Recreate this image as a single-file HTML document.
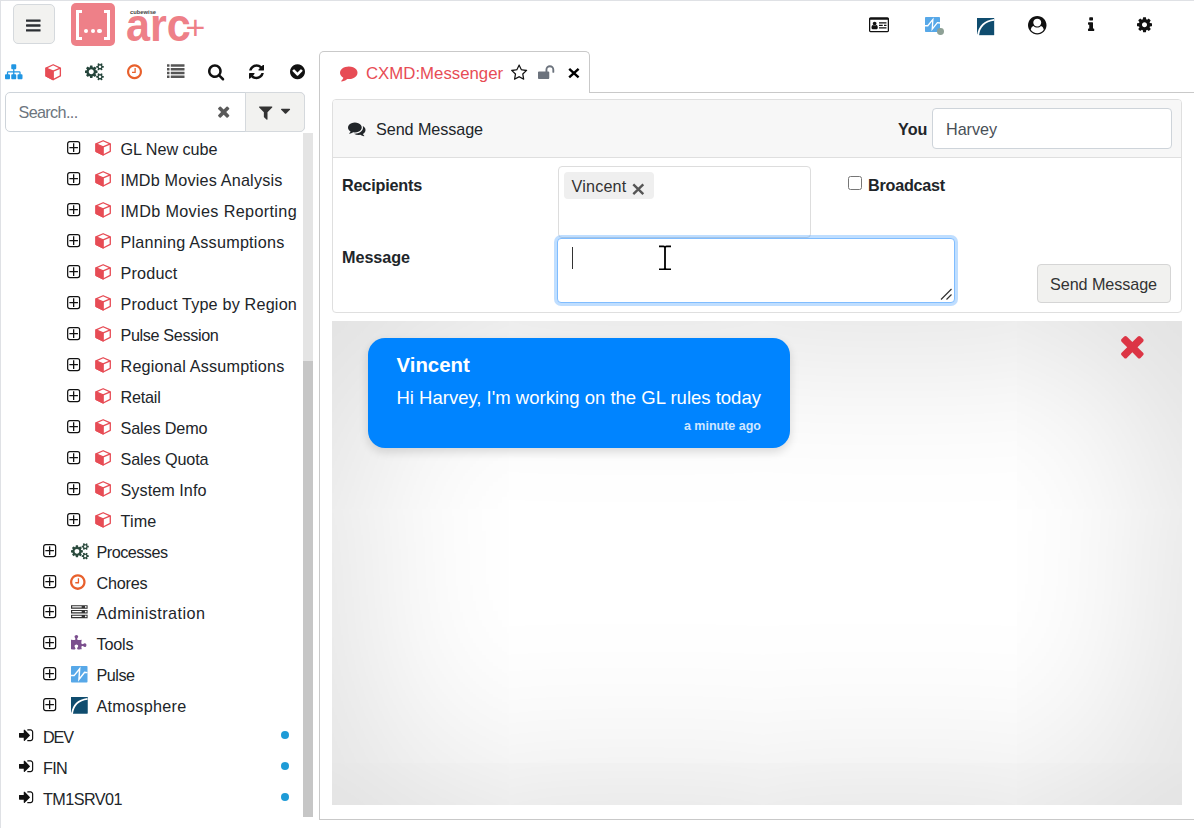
<!DOCTYPE html>
<html lang="en"><head><meta charset="utf-8"><title>Arc+ Messenger</title>
<style>
html,body{margin:0;padding:0}
body{width:1194px;height:828px;position:relative;overflow:hidden;background:#fff;font-family:"Liberation Sans",sans-serif;color:#212529;font-size:16.2px}
.i{position:absolute;display:block;overflow:visible}
.t{position:absolute;white-space:nowrap;line-height:24px;height:24px;font-size:16.2px;transform-origin:0 50%}
.b{font-weight:bold}
.abs{position:absolute}
.dot{position:absolute;left:281px;width:8px;height:8px;border-radius:50%;background:#1e9bd7}
</style></head><body>
<div class="abs" style="left:0;top:0;width:1194px;height:1px;background:#dfe1e5"></div>
<div class="abs" style="left:0;top:0;width:1px;height:828px;background:#dfe1e5"></div>

<!-- header -->
<div class="abs" style="left:13.3px;top:4px;width:39.5px;height:38px;border:1px solid #d5d9dd;border-radius:5px;background:#f2f2f0"></div>
<svg class="i" style="left:26.2px;top:16.5px;width:14.57px;height:17px;" viewBox="0 -1536 1536 1792"><path fill="#2b2f33" transform="scale(1,-1)" d="M1536 192v-128q0 -26 -19 -45t-45 -19h-1408q-26 0 -45 19t-19 45v128q0 26 19 45t45 19h1408q26 0 45 -19t19 -45zM1536 704v-128q0 -26 -19 -45t-45 -19h-1408q-26 0 -45 19t-19 45v128q0 26 19 45t45 19h1408q26 0 45 -19t19 -45zM1536 1216v-128q0 -26 -19 -45 t-45 -19h-1408q-26 0 -45 19t-19 45v128q0 26 19 45t45 19h1408q26 0 45 -19t19 -45z"/></svg>
<div class="abs" style="left:71px;top:2.7px;width:44px;height:43px;border-radius:5px;background:#ee8088"></div>
<div class="abs" style="left:75.5px;top:9.5px;width:6px;height:30px;border:3.4px solid #fff;border-right:none;box-sizing:border-box"></div>
<div class="abs" style="left:104px;top:9.5px;width:6px;height:30px;border:3.4px solid #fff;border-left:none;box-sizing:border-box"></div>
<div class="abs" style="left:83.8px;top:28.6px;width:4.6px;height:4.6px;border-radius:50%;background:#fff"></div>
<div class="abs" style="left:90.5px;top:28.6px;width:4.6px;height:4.6px;border-radius:50%;background:#fff"></div>
<div class="abs" style="left:97.2px;top:28.6px;width:4.6px;height:4.6px;border-radius:50%;background:#fff"></div>
<span class="abs" id="cw" style="left:130px;top:7.6px;font-size:5.8px;font-weight:bold;color:#444;line-height:8px;letter-spacing:0">cubewise</span>
<span class="abs" id="arc" style="left:126.3px;top:1.3px;font-size:45.7px;font-weight:bold;color:#ee8088;line-height:50px;transform:scaleX(0.945);transform-origin:0 0;white-space:nowrap">arc</span>
<span class="abs" id="plus" style="left:185.6px;top:6.8px;font-size:34px;color:#ee8088;line-height:40px">+</span>
<svg class="i" style="left:869px;top:16px;width:20.00px;height:17.5px;" viewBox="0 -1536 2048 1792"><path fill="#111" transform="scale(1,-1)" d="M896 324q0 -55 -31.5 -93.5t-75.5 -38.5h-426q-44 0 -75.5 38.5t-31.5 93.5q0 54 7.5 100.5t24.5 90t51 68.5t81 25q64 -64 156 -64t156 64q47 0 81 -25t51 -68.5t24.5 -90t7.5 -100.5zM768 768q0 -80 -56 -136t-136 -56t-136 56t-56 136t56 136t136 56t136 -56t56 -136z M1792 352v-64q0 -14 -9 -23t-23 -9h-704q-14 0 -23 9t-9 23v64q0 14 9 23t23 9h704q14 0 23 -9t9 -23zM1408 608v-64q0 -14 -9 -23t-23 -9h-320q-14 0 -23 9t-9 23v64q0 14 9 23t23 9h320q14 0 23 -9t9 -23zM1792 608v-64q0 -14 -9 -23t-23 -9h-192q-14 0 -23 9t-9 23v64 q0 14 9 23t23 9h192q14 0 23 -9t9 -23zM1792 864v-64q0 -14 -9 -23t-23 -9h-704q-14 0 -23 9t-9 23v64q0 14 9 23t23 9h704q14 0 23 -9t9 -23zM1920 32v1120h-1792v-1120q0 -13 9.5 -22.5t22.5 -9.5h1728q13 0 22.5 9.5t9.5 22.5zM2048 1248v-1216q0 -66 -47 -113t-113 -47 h-1728q-66 0 -113 47t-47 113v1216q0 66 47 113t113 47h1728q66 0 113 -47t47 -113z"/></svg><svg class="i" style="left:925px;top:17px;width:15px;height:15px" viewBox="0 0 16 16"><rect width="16" height="16" rx="0.8" fill="#57a8e8"/><path d="M0 9.3 L3 9.3 L8.4 2.6 L7.7 13 L13.2 6 L16 6.4" stroke="#fff" stroke-width="1.4" fill="none" stroke-linejoin="miter"/></svg><div style="position:absolute;left:937px;top:28px;width:6.8px;height:6.8px;border-radius:50%;background:#8ea196"></div><svg class="i" style="left:977px;top:17.8px;width:17.1px;height:17.1px" viewBox="0 0 18 18"><rect width="18" height="18" fill="#0f4c6e"/><path d="M0 0H18V18H0Z" fill="#0f4c6e"/><path d="M-1 18H1.2Q3 4 18 2" stroke="#fff" stroke-width="2" fill="none"/><path d="M-1 19L1.2 18Q2 12 4 8L-1 8Z" fill="#fff" opacity="0"/></svg><svg class="i" style="left:1028px;top:15.5px;width:18.50px;height:18.5px;" viewBox="0 -1536 1792 1792"><path fill="#111" transform="scale(1,-1)" d="M1523 197q-22 155 -87.5 257.5t-184.5 118.5q-67 -74 -159.5 -115.5t-195.5 -41.5t-195.5 41.5t-159.5 115.5q-119 -16 -184.5 -118.5t-87.5 -257.5q106 -150 271 -237.5t356 -87.5t356 87.5t271 237.5zM1280 896q0 159 -112.5 271.5t-271.5 112.5t-271.5 -112.5 t-112.5 -271.5t112.5 -271.5t271.5 -112.5t271.5 112.5t112.5 271.5zM1792 640q0 -182 -71 -347.5t-190.5 -286t-285.5 -191.5t-349 -71q-182 0 -348 71t-286 191t-191 286t-71 348t71 348t191 286t286 191t348 71t348 -71t286 -191t191 -286t71 -348z"/></svg><svg class="i" style="left:1087.5px;top:16px;width:6.25px;height:17.5px;" viewBox="0 -1536 640 1792"><path fill="#111" transform="scale(1,-1)" d="M640 192v-128q0 -26 -19 -45t-45 -19h-512q-26 0 -45 19t-19 45v128q0 26 19 45t45 19h64v384h-64q-26 0 -45 19t-19 45v128q0 26 19 45t45 19h384q26 0 45 -19t19 -45v-576h64q26 0 45 -19t19 -45zM512 1344v-192q0 -26 -19 -45t-45 -19h-256q-26 0 -45 19t-19 45v192 q0 26 19 45t45 19h256q26 0 45 -19t19 -45z"/></svg><svg class="i" style="left:1137px;top:16px;width:15.00px;height:17.5px;" viewBox="0 -1536 1536 1792"><path fill="#111" transform="scale(1,-1)" d="M1024 640q0 106 -75 181t-181 75t-181 -75t-75 -181t75 -181t181 -75t181 75t75 181zM1536 749v-222q0 -12 -8 -23t-20 -13l-185 -28q-19 -54 -39 -91q35 -50 107 -138q10 -12 10 -25t-9 -23q-27 -37 -99 -108t-94 -71q-12 0 -26 9l-138 108q-44 -23 -91 -38 q-16 -136 -29 -186q-7 -28 -36 -28h-222q-14 0 -24.5 8.5t-11.5 21.5l-28 184q-49 16 -90 37l-141 -107q-10 -9 -25 -9q-14 0 -25 11q-126 114 -165 168q-7 10 -7 23q0 12 8 23q15 21 51 66.5t54 70.5q-27 50 -41 99l-183 27q-13 2 -21 12.5t-8 23.5v222q0 12 8 23t19 13 l186 28q14 46 39 92q-40 57 -107 138q-10 12 -10 24q0 10 9 23q26 36 98.5 107.5t94.5 71.5q13 0 26 -10l138 -107q44 23 91 38q16 136 29 186q7 28 36 28h222q14 0 24.5 -8.5t11.5 -21.5l28 -184q49 -16 90 -37l142 107q9 9 24 9q13 0 25 -10q129 -119 165 -170q7 -8 7 -22 q0 -12 -8 -23q-15 -21 -51 -66.5t-54 -70.5q26 -50 41 -98l183 -28q13 -2 21 -12.5t8 -23.5z"/></svg>

<!-- left toolbar -->
<svg class="i" style="left:4.5px;top:63px;width:17.50px;height:17.5px;" viewBox="0 -1536 1792 1792"><path fill="#2196e3" transform="scale(1,-1)" d="M1792 288v-320q0 -40 -28 -68t-68 -28h-320q-40 0 -68 28t-28 68v320q0 40 28 68t68 28h96v192h-512v-192h96q40 0 68 -28t28 -68v-320q0 -40 -28 -68t-68 -28h-320q-40 0 -68 28t-28 68v320q0 40 28 68t68 28h96v192h-512v-192h96q40 0 68 -28t28 -68v-320 q0 -40 -28 -68t-68 -28h-320q-40 0 -68 28t-28 68v320q0 40 28 68t68 28h96v192q0 52 38 90t90 38h512v192h-96q-40 0 -68 28t-28 68v320q0 40 28 68t68 28h320q40 0 68 -28t28 -68v-320q0 -40 -28 -68t-68 -28h-96v-192h512q52 0 90 -38t38 -90v-192h96q40 0 68 -28t28 -68 z"/></svg><svg class="i" style="left:44.8px;top:64px;width:16.4px;height:16.4px" viewBox="0 0 32 32" preserveAspectRatio="none"><path d="M16 1.5 L30 8 L30 23.2 L16 30.5 L2 23.2 L2 8 Z" fill="#fff" stroke="#e74c55" stroke-width="2.6" stroke-linejoin="round"/><path d="M2 8 L16 14.1 L16 30.5 L2 23.2 Z" fill="#e74c55" stroke="#e74c55" stroke-width="2.6" stroke-linejoin="round"/><path d="M16 14.1 L30 8" stroke="#e74c55" stroke-width="2.6" fill="none"/></svg><svg class="i" style="left:85px;top:63px;width:18.75px;height:17.5px;" viewBox="0 -1536 1920 1792"><path fill="#24443a" transform="scale(1,-1)" d="M896 640q0 106 -75 181t-181 75t-181 -75t-75 -181t75 -181t181 -75t181 75t75 181zM1664 128q0 52 -38 90t-90 38t-90 -38t-38 -90q0 -53 37.5 -90.5t90.5 -37.5t90.5 37.5t37.5 90.5zM1664 1152q0 52 -38 90t-90 38t-90 -38t-38 -90q0 -53 37.5 -90.5t90.5 -37.5 t90.5 37.5t37.5 90.5zM1280 731v-185q0 -10 -7 -19.5t-16 -10.5l-155 -24q-11 -35 -32 -76q34 -48 90 -115q7 -11 7 -20q0 -12 -7 -19q-23 -30 -82.5 -89.5t-78.5 -59.5q-11 0 -21 7l-115 90q-37 -19 -77 -31q-11 -108 -23 -155q-7 -24 -30 -24h-186q-11 0 -20 7.5t-10 17.5 l-23 153q-34 10 -75 31l-118 -89q-7 -7 -20 -7q-11 0 -21 8q-144 133 -144 160q0 9 7 19q10 14 41 53t47 61q-23 44 -35 82l-152 24q-10 1 -17 9.5t-7 19.5v185q0 10 7 19.5t16 10.5l155 24q11 35 32 76q-34 48 -90 115q-7 11 -7 20q0 12 7 20q22 30 82 89t79 59q11 0 21 -7 l115 -90q34 18 77 32q11 108 23 154q7 24 30 24h186q11 0 20 -7.5t10 -17.5l23 -153q34 -10 75 -31l118 89q8 7 20 7q11 0 21 -8q144 -133 144 -160q0 -8 -7 -19q-12 -16 -42 -54t-45 -60q23 -48 34 -82l152 -23q10 -2 17 -10.5t7 -19.5zM1920 198v-140q0 -16 -149 -31 q-12 -27 -30 -52q51 -113 51 -138q0 -4 -4 -7q-122 -71 -124 -71q-8 0 -46 47t-52 68q-20 -2 -30 -2t-30 2q-14 -21 -52 -68t-46 -47q-2 0 -124 71q-4 3 -4 7q0 25 51 138q-18 25 -30 52q-149 15 -149 31v140q0 16 149 31q13 29 30 52q-51 113 -51 138q0 4 4 7q4 2 35 20 t59 34t30 16q8 0 46 -46.5t52 -67.5q20 2 30 2t30 -2q51 71 92 112l6 2q4 0 124 -70q4 -3 4 -7q0 -25 -51 -138q17 -23 30 -52q149 -15 149 -31zM1920 1222v-140q0 -16 -149 -31q-12 -27 -30 -52q51 -113 51 -138q0 -4 -4 -7q-122 -71 -124 -71q-8 0 -46 47t-52 68 q-20 -2 -30 -2t-30 2q-14 -21 -52 -68t-46 -47q-2 0 -124 71q-4 3 -4 7q0 25 51 138q-18 25 -30 52q-149 15 -149 31v140q0 16 149 31q13 29 30 52q-51 113 -51 138q0 4 4 7q4 2 35 20t59 34t30 16q8 0 46 -46.5t52 -67.5q20 2 30 2t30 -2q51 71 92 112l6 2q4 0 124 -70 q4 -3 4 -7q0 -25 -51 -138q17 -23 30 -52q149 -15 149 -31z"/></svg><svg class="i" style="left:127px;top:63px;width:15.00px;height:17.5px;" viewBox="0 -1536 1536 1792"><path fill="#e8602c" transform="scale(1,-1)" d="M896 992v-448q0 -14 -9 -23t-23 -9h-320q-14 0 -23 9t-9 23v64q0 14 9 23t23 9h224v352q0 14 9 23t23 9h64q14 0 23 -9t9 -23zM1312 640q0 148 -73 273t-198 198t-273 73t-273 -73t-198 -198t-73 -273t73 -273t198 -198t273 -73t273 73t198 198t73 273zM1536 640 q0 -209 -103 -385.5t-279.5 -279.5t-385.5 -103t-385.5 103t-279.5 279.5t-103 385.5t103 385.5t279.5 279.5t385.5 103t385.5 -103t279.5 -279.5t103 -385.5z"/></svg><svg class="i" style="left:166.7px;top:63px;width:17.50px;height:17.5px;" viewBox="0 -1536 1792 1792"><path fill="#555" transform="scale(1,-1)" d="M256 224v-192q0 -13 -9.5 -22.5t-22.5 -9.5h-192q-13 0 -22.5 9.5t-9.5 22.5v192q0 13 9.5 22.5t22.5 9.5h192q13 0 22.5 -9.5t9.5 -22.5zM256 608v-192q0 -13 -9.5 -22.5t-22.5 -9.5h-192q-13 0 -22.5 9.5t-9.5 22.5v192q0 13 9.5 22.5t22.5 9.5h192q13 0 22.5 -9.5 t9.5 -22.5zM256 992v-192q0 -13 -9.5 -22.5t-22.5 -9.5h-192q-13 0 -22.5 9.5t-9.5 22.5v192q0 13 9.5 22.5t22.5 9.5h192q13 0 22.5 -9.5t9.5 -22.5zM1792 224v-192q0 -13 -9.5 -22.5t-22.5 -9.5h-1344q-13 0 -22.5 9.5t-9.5 22.5v192q0 13 9.5 22.5t22.5 9.5h1344 q13 0 22.5 -9.5t9.5 -22.5zM256 1376v-192q0 -13 -9.5 -22.5t-22.5 -9.5h-192q-13 0 -22.5 9.5t-9.5 22.5v192q0 13 9.5 22.5t22.5 9.5h192q13 0 22.5 -9.5t9.5 -22.5zM1792 608v-192q0 -13 -9.5 -22.5t-22.5 -9.5h-1344q-13 0 -22.5 9.5t-9.5 22.5v192q0 13 9.5 22.5 t22.5 9.5h1344q13 0 22.5 -9.5t9.5 -22.5zM1792 992v-192q0 -13 -9.5 -22.5t-22.5 -9.5h-1344q-13 0 -22.5 9.5t-9.5 22.5v192q0 13 9.5 22.5t22.5 9.5h1344q13 0 22.5 -9.5t9.5 -22.5zM1792 1376v-192q0 -13 -9.5 -22.5t-22.5 -9.5h-1344q-13 0 -22.5 9.5t-9.5 22.5v192 q0 13 9.5 22.5t22.5 9.5h1344q13 0 22.5 -9.5t9.5 -22.5z"/></svg><svg class="i" style="left:208px;top:63px;width:16.25px;height:17.5px;" viewBox="0 -1536 1664 1792"><path fill="#111" transform="scale(1,-1)" d="M1152 704q0 185 -131.5 316.5t-316.5 131.5t-316.5 -131.5t-131.5 -316.5t131.5 -316.5t316.5 -131.5t316.5 131.5t131.5 316.5zM1664 -128q0 -52 -38 -90t-90 -38q-54 0 -90 38l-343 342q-179 -124 -399 -124q-143 0 -273.5 55.5t-225 150t-150 225t-55.5 273.5 t55.5 273.5t150 225t225 150t273.5 55.5t273.5 -55.5t225 -150t150 -225t55.5 -273.5q0 -220 -124 -399l343 -343q37 -37 37 -90z"/></svg><svg class="i" style="left:249px;top:63px;width:15.00px;height:17.5px;" viewBox="0 -1536 1536 1792"><path fill="#111" transform="scale(1,-1)" d="M1511 480q0 -5 -1 -7q-64 -268 -268 -434.5t-478 -166.5q-146 0 -282.5 55t-243.5 157l-129 -129q-19 -19 -45 -19t-45 19t-19 45v448q0 26 19 45t45 19h448q26 0 45 -19t19 -45t-19 -45l-137 -137q71 -66 161 -102t187 -36q134 0 250 65t186 179q11 17 53 117 q8 23 30 23h192q13 0 22.5 -9.5t9.5 -22.5zM1536 1280v-448q0 -26 -19 -45t-45 -19h-448q-26 0 -45 19t-19 45t19 45l138 138q-148 137 -349 137q-134 0 -250 -65t-186 -179q-11 -17 -53 -117q-8 -23 -30 -23h-199q-13 0 -22.5 9.5t-9.5 22.5v7q65 268 270 434.5t480 166.5 q146 0 284 -55.5t245 -156.5l130 129q19 19 45 19t45 -19t19 -45z"/></svg><svg class="i" style="left:289.5px;top:63px;width:15.00px;height:17.5px;" viewBox="0 -1536 1536 1792"><path fill="#111" transform="scale(1,-1)" d="M813 237l454 454q19 19 19 45t-19 45l-102 102q-19 19 -45 19t-45 -19l-307 -307l-307 307q-19 19 -45 19t-45 -19l-102 -102q-19 -19 -19 -45t19 -45l454 -454q19 -19 45 -19t45 19zM1536 640q0 -209 -103 -385.5t-279.5 -279.5t-385.5 -103t-385.5 103t-279.5 279.5 t-103 385.5t103 385.5t279.5 279.5t385.5 103t385.5 -103t279.5 -279.5t103 -385.5z"/></svg>
<div class="abs" style="left:5px;top:92px;width:298px;height:38px;border:1px solid #ced4da;border-radius:5px;background:#fff"></div>
<div class="abs" style="left:245px;top:92px;width:58px;height:38px;border:1px solid #d5d9dd;border-radius:0 5px 5px 0;background:#f2f2f0"></div>
<span class="t" id="srch" style="left:18.5px;top:100px;color:#6c757d;letter-spacing:-0.644px">Search...</span>
<svg class="i" style="left:216.8px;top:103px;width:13.36px;height:17px;" viewBox="0 -1536 1408 1792"><path fill="#5a5a5a" transform="scale(1,-1)" d="M1298 214q0 -40 -28 -68l-136 -136q-28 -28 -68 -28t-68 28l-294 294l-294 -294q-28 -28 -68 -28t-68 28l-136 136q-28 28 -28 68t28 68l294 294l-294 294q-28 28 -28 68t28 68l136 136q28 28 68 28t68 -28l294 -294l294 294q28 28 68 28t68 -28l136 -136q28 -28 28 -68 t-28 -68l-294 -294l294 -294q28 -28 28 -68z"/></svg>
<svg class="i" style="left:259px;top:103.5px;width:13.36px;height:17px;" viewBox="0 -1536 1408 1792"><path fill="#333" transform="scale(1,-1)" d="M1403 1241q17 -41 -14 -70l-493 -493v-742q0 -42 -39 -59q-13 -5 -25 -5q-27 0 -45 19l-256 256q-19 19 -19 45v486l-493 493q-31 29 -14 70q17 39 59 39h1280q42 0 59 -39z"/></svg>
<svg class="i" style="left:281px;top:103.2px;width:9.14px;height:16px;" viewBox="0 -1536 1024 1792"><path fill="#333" transform="scale(1,-1)" d="M1024 832q0 -26 -19 -45l-448 -448q-19 -19 -45 -19t-45 19l-448 448q-19 19 -19 45t19 45t45 19h896q26 0 45 -19t19 -45z"/></svg>

<!-- tree -->
<svg class="i" style="left:66.7px;top:140.85px;width:13.3px;height:13.3px" viewBox="0 0 14 14"><rect x="0.7" y="0.7" width="12.6" height="12.6" rx="2.2" fill="none" stroke="#111" stroke-width="1.3"/><path d="M7 2.5V11.5M2.5 7H11.5" stroke="#111" stroke-width="1.35"/></svg>
<svg class="i" style="left:94.7px;top:140.3px;width:16.3px;height:15.7px" viewBox="0 0 32 32" preserveAspectRatio="none"><path d="M16 1.5 L30 8 L30 23.2 L16 30.5 L2 23.2 L2 8 Z" fill="#fff" stroke="#e74c55" stroke-width="2.6" stroke-linejoin="round"/><path d="M2 8 L16 14.1 L16 30.5 L2 23.2 Z" fill="#e74c55" stroke="#e74c55" stroke-width="2.6" stroke-linejoin="round"/><path d="M16 14.1 L30 8" stroke="#e74c55" stroke-width="2.6" fill="none"/></svg>
<span class="t" style="left:120.5px;top:137.30px;letter-spacing:-0.044px">GL New cube</span>
<svg class="i" style="left:66.7px;top:171.85px;width:13.3px;height:13.3px" viewBox="0 0 14 14"><rect x="0.7" y="0.7" width="12.6" height="12.6" rx="2.2" fill="none" stroke="#111" stroke-width="1.3"/><path d="M7 2.5V11.5M2.5 7H11.5" stroke="#111" stroke-width="1.35"/></svg>
<svg class="i" style="left:94.7px;top:171.3px;width:16.3px;height:15.7px" viewBox="0 0 32 32" preserveAspectRatio="none"><path d="M16 1.5 L30 8 L30 23.2 L16 30.5 L2 23.2 L2 8 Z" fill="#fff" stroke="#e74c55" stroke-width="2.6" stroke-linejoin="round"/><path d="M2 8 L16 14.1 L16 30.5 L2 23.2 Z" fill="#e74c55" stroke="#e74c55" stroke-width="2.6" stroke-linejoin="round"/><path d="M16 14.1 L30 8" stroke="#e74c55" stroke-width="2.6" fill="none"/></svg>
<span class="t" style="left:120.5px;top:168.30px;letter-spacing:0.184px">IMDb Movies Analysis</span>
<svg class="i" style="left:66.7px;top:202.85px;width:13.3px;height:13.3px" viewBox="0 0 14 14"><rect x="0.7" y="0.7" width="12.6" height="12.6" rx="2.2" fill="none" stroke="#111" stroke-width="1.3"/><path d="M7 2.5V11.5M2.5 7H11.5" stroke="#111" stroke-width="1.35"/></svg>
<svg class="i" style="left:94.7px;top:202.3px;width:16.3px;height:15.7px" viewBox="0 0 32 32" preserveAspectRatio="none"><path d="M16 1.5 L30 8 L30 23.2 L16 30.5 L2 23.2 L2 8 Z" fill="#fff" stroke="#e74c55" stroke-width="2.6" stroke-linejoin="round"/><path d="M2 8 L16 14.1 L16 30.5 L2 23.2 Z" fill="#e74c55" stroke="#e74c55" stroke-width="2.6" stroke-linejoin="round"/><path d="M16 14.1 L30 8" stroke="#e74c55" stroke-width="2.6" fill="none"/></svg>
<span class="t" style="left:120.5px;top:199.30px;letter-spacing:0.350px">IMDb Movies Reporting</span>
<svg class="i" style="left:66.7px;top:233.85px;width:13.3px;height:13.3px" viewBox="0 0 14 14"><rect x="0.7" y="0.7" width="12.6" height="12.6" rx="2.2" fill="none" stroke="#111" stroke-width="1.3"/><path d="M7 2.5V11.5M2.5 7H11.5" stroke="#111" stroke-width="1.35"/></svg>
<svg class="i" style="left:94.7px;top:233.3px;width:16.3px;height:15.7px" viewBox="0 0 32 32" preserveAspectRatio="none"><path d="M16 1.5 L30 8 L30 23.2 L16 30.5 L2 23.2 L2 8 Z" fill="#fff" stroke="#e74c55" stroke-width="2.6" stroke-linejoin="round"/><path d="M2 8 L16 14.1 L16 30.5 L2 23.2 Z" fill="#e74c55" stroke="#e74c55" stroke-width="2.6" stroke-linejoin="round"/><path d="M16 14.1 L30 8" stroke="#e74c55" stroke-width="2.6" fill="none"/></svg>
<span class="t" style="left:120.5px;top:230.30px;letter-spacing:0.236px">Planning Assumptions</span>
<svg class="i" style="left:66.7px;top:264.85px;width:13.3px;height:13.3px" viewBox="0 0 14 14"><rect x="0.7" y="0.7" width="12.6" height="12.6" rx="2.2" fill="none" stroke="#111" stroke-width="1.3"/><path d="M7 2.5V11.5M2.5 7H11.5" stroke="#111" stroke-width="1.35"/></svg>
<svg class="i" style="left:94.7px;top:264.3px;width:16.3px;height:15.7px" viewBox="0 0 32 32" preserveAspectRatio="none"><path d="M16 1.5 L30 8 L30 23.2 L16 30.5 L2 23.2 L2 8 Z" fill="#fff" stroke="#e74c55" stroke-width="2.6" stroke-linejoin="round"/><path d="M2 8 L16 14.1 L16 30.5 L2 23.2 Z" fill="#e74c55" stroke="#e74c55" stroke-width="2.6" stroke-linejoin="round"/><path d="M16 14.1 L30 8" stroke="#e74c55" stroke-width="2.6" fill="none"/></svg>
<span class="t" style="left:120.5px;top:261.30px;letter-spacing:0.172px">Product</span>
<svg class="i" style="left:66.7px;top:295.85px;width:13.3px;height:13.3px" viewBox="0 0 14 14"><rect x="0.7" y="0.7" width="12.6" height="12.6" rx="2.2" fill="none" stroke="#111" stroke-width="1.3"/><path d="M7 2.5V11.5M2.5 7H11.5" stroke="#111" stroke-width="1.35"/></svg>
<svg class="i" style="left:94.7px;top:295.3px;width:16.3px;height:15.7px" viewBox="0 0 32 32" preserveAspectRatio="none"><path d="M16 1.5 L30 8 L30 23.2 L16 30.5 L2 23.2 L2 8 Z" fill="#fff" stroke="#e74c55" stroke-width="2.6" stroke-linejoin="round"/><path d="M2 8 L16 14.1 L16 30.5 L2 23.2 Z" fill="#e74c55" stroke="#e74c55" stroke-width="2.6" stroke-linejoin="round"/><path d="M16 14.1 L30 8" stroke="#e74c55" stroke-width="2.6" fill="none"/></svg>
<span class="t" style="left:120.5px;top:292.30px;letter-spacing:0.183px">Product Type by Region</span>
<svg class="i" style="left:66.7px;top:326.85px;width:13.3px;height:13.3px" viewBox="0 0 14 14"><rect x="0.7" y="0.7" width="12.6" height="12.6" rx="2.2" fill="none" stroke="#111" stroke-width="1.3"/><path d="M7 2.5V11.5M2.5 7H11.5" stroke="#111" stroke-width="1.35"/></svg>
<svg class="i" style="left:94.7px;top:326.3px;width:16.3px;height:15.7px" viewBox="0 0 32 32" preserveAspectRatio="none"><path d="M16 1.5 L30 8 L30 23.2 L16 30.5 L2 23.2 L2 8 Z" fill="#fff" stroke="#e74c55" stroke-width="2.6" stroke-linejoin="round"/><path d="M2 8 L16 14.1 L16 30.5 L2 23.2 Z" fill="#e74c55" stroke="#e74c55" stroke-width="2.6" stroke-linejoin="round"/><path d="M16 14.1 L30 8" stroke="#e74c55" stroke-width="2.6" fill="none"/></svg>
<span class="t" style="left:120.5px;top:323.30px;letter-spacing:-0.353px">Pulse Session</span>
<svg class="i" style="left:66.7px;top:357.85px;width:13.3px;height:13.3px" viewBox="0 0 14 14"><rect x="0.7" y="0.7" width="12.6" height="12.6" rx="2.2" fill="none" stroke="#111" stroke-width="1.3"/><path d="M7 2.5V11.5M2.5 7H11.5" stroke="#111" stroke-width="1.35"/></svg>
<svg class="i" style="left:94.7px;top:357.3px;width:16.3px;height:15.7px" viewBox="0 0 32 32" preserveAspectRatio="none"><path d="M16 1.5 L30 8 L30 23.2 L16 30.5 L2 23.2 L2 8 Z" fill="#fff" stroke="#e74c55" stroke-width="2.6" stroke-linejoin="round"/><path d="M2 8 L16 14.1 L16 30.5 L2 23.2 Z" fill="#e74c55" stroke="#e74c55" stroke-width="2.6" stroke-linejoin="round"/><path d="M16 14.1 L30 8" stroke="#e74c55" stroke-width="2.6" fill="none"/></svg>
<span class="t" style="left:120.5px;top:354.30px;letter-spacing:0.191px">Regional Assumptions</span>
<svg class="i" style="left:66.7px;top:388.85px;width:13.3px;height:13.3px" viewBox="0 0 14 14"><rect x="0.7" y="0.7" width="12.6" height="12.6" rx="2.2" fill="none" stroke="#111" stroke-width="1.3"/><path d="M7 2.5V11.5M2.5 7H11.5" stroke="#111" stroke-width="1.35"/></svg>
<svg class="i" style="left:94.7px;top:388.3px;width:16.3px;height:15.7px" viewBox="0 0 32 32" preserveAspectRatio="none"><path d="M16 1.5 L30 8 L30 23.2 L16 30.5 L2 23.2 L2 8 Z" fill="#fff" stroke="#e74c55" stroke-width="2.6" stroke-linejoin="round"/><path d="M2 8 L16 14.1 L16 30.5 L2 23.2 Z" fill="#e74c55" stroke="#e74c55" stroke-width="2.6" stroke-linejoin="round"/><path d="M16 14.1 L30 8" stroke="#e74c55" stroke-width="2.6" fill="none"/></svg>
<span class="t" style="left:120.5px;top:385.30px;letter-spacing:-0.232px">Retail</span>
<svg class="i" style="left:66.7px;top:419.85px;width:13.3px;height:13.3px" viewBox="0 0 14 14"><rect x="0.7" y="0.7" width="12.6" height="12.6" rx="2.2" fill="none" stroke="#111" stroke-width="1.3"/><path d="M7 2.5V11.5M2.5 7H11.5" stroke="#111" stroke-width="1.35"/></svg>
<svg class="i" style="left:94.7px;top:419.3px;width:16.3px;height:15.7px" viewBox="0 0 32 32" preserveAspectRatio="none"><path d="M16 1.5 L30 8 L30 23.2 L16 30.5 L2 23.2 L2 8 Z" fill="#fff" stroke="#e74c55" stroke-width="2.6" stroke-linejoin="round"/><path d="M2 8 L16 14.1 L16 30.5 L2 23.2 Z" fill="#e74c55" stroke="#e74c55" stroke-width="2.6" stroke-linejoin="round"/><path d="M16 14.1 L30 8" stroke="#e74c55" stroke-width="2.6" fill="none"/></svg>
<span class="t" style="left:120.5px;top:416.30px;letter-spacing:-0.117px">Sales Demo</span>
<svg class="i" style="left:66.7px;top:450.85px;width:13.3px;height:13.3px" viewBox="0 0 14 14"><rect x="0.7" y="0.7" width="12.6" height="12.6" rx="2.2" fill="none" stroke="#111" stroke-width="1.3"/><path d="M7 2.5V11.5M2.5 7H11.5" stroke="#111" stroke-width="1.35"/></svg>
<svg class="i" style="left:94.7px;top:450.3px;width:16.3px;height:15.7px" viewBox="0 0 32 32" preserveAspectRatio="none"><path d="M16 1.5 L30 8 L30 23.2 L16 30.5 L2 23.2 L2 8 Z" fill="#fff" stroke="#e74c55" stroke-width="2.6" stroke-linejoin="round"/><path d="M2 8 L16 14.1 L16 30.5 L2 23.2 Z" fill="#e74c55" stroke="#e74c55" stroke-width="2.6" stroke-linejoin="round"/><path d="M16 14.1 L30 8" stroke="#e74c55" stroke-width="2.6" fill="none"/></svg>
<span class="t" style="left:120.5px;top:447.30px;letter-spacing:-0.099px">Sales Quota</span>
<svg class="i" style="left:66.7px;top:481.85px;width:13.3px;height:13.3px" viewBox="0 0 14 14"><rect x="0.7" y="0.7" width="12.6" height="12.6" rx="2.2" fill="none" stroke="#111" stroke-width="1.3"/><path d="M7 2.5V11.5M2.5 7H11.5" stroke="#111" stroke-width="1.35"/></svg>
<svg class="i" style="left:94.7px;top:481.3px;width:16.3px;height:15.7px" viewBox="0 0 32 32" preserveAspectRatio="none"><path d="M16 1.5 L30 8 L30 23.2 L16 30.5 L2 23.2 L2 8 Z" fill="#fff" stroke="#e74c55" stroke-width="2.6" stroke-linejoin="round"/><path d="M2 8 L16 14.1 L16 30.5 L2 23.2 Z" fill="#e74c55" stroke="#e74c55" stroke-width="2.6" stroke-linejoin="round"/><path d="M16 14.1 L30 8" stroke="#e74c55" stroke-width="2.6" fill="none"/></svg>
<span class="t" style="left:120.5px;top:478.30px;letter-spacing:0.048px">System Info</span>
<svg class="i" style="left:66.7px;top:512.85px;width:13.3px;height:13.3px" viewBox="0 0 14 14"><rect x="0.7" y="0.7" width="12.6" height="12.6" rx="2.2" fill="none" stroke="#111" stroke-width="1.3"/><path d="M7 2.5V11.5M2.5 7H11.5" stroke="#111" stroke-width="1.35"/></svg>
<svg class="i" style="left:94.7px;top:512.3px;width:16.3px;height:15.7px" viewBox="0 0 32 32" preserveAspectRatio="none"><path d="M16 1.5 L30 8 L30 23.2 L16 30.5 L2 23.2 L2 8 Z" fill="#fff" stroke="#e74c55" stroke-width="2.6" stroke-linejoin="round"/><path d="M2 8 L16 14.1 L16 30.5 L2 23.2 Z" fill="#e74c55" stroke="#e74c55" stroke-width="2.6" stroke-linejoin="round"/><path d="M16 14.1 L30 8" stroke="#e74c55" stroke-width="2.6" fill="none"/></svg>
<span class="t" style="left:120.5px;top:509.30px;letter-spacing:0.156px">Time</span>
<svg class="i" style="left:42.7px;top:543.85px;width:13.3px;height:13.3px" viewBox="0 0 14 14"><rect x="0.7" y="0.7" width="12.6" height="12.6" rx="2.2" fill="none" stroke="#111" stroke-width="1.3"/><path d="M7 2.5V11.5M2.5 7H11.5" stroke="#111" stroke-width="1.35"/></svg>
<svg class="i" style="left:70.5px;top:543.1px;width:17.79px;height:16.6px;" viewBox="0 -1536 1920 1792"><path fill="#2a4a3d" transform="scale(1,-1)" d="M896 640q0 106 -75 181t-181 75t-181 -75t-75 -181t75 -181t181 -75t181 75t75 181zM1664 128q0 52 -38 90t-90 38t-90 -38t-38 -90q0 -53 37.5 -90.5t90.5 -37.5t90.5 37.5t37.5 90.5zM1664 1152q0 52 -38 90t-90 38t-90 -38t-38 -90q0 -53 37.5 -90.5t90.5 -37.5 t90.5 37.5t37.5 90.5zM1280 731v-185q0 -10 -7 -19.5t-16 -10.5l-155 -24q-11 -35 -32 -76q34 -48 90 -115q7 -11 7 -20q0 -12 -7 -19q-23 -30 -82.5 -89.5t-78.5 -59.5q-11 0 -21 7l-115 90q-37 -19 -77 -31q-11 -108 -23 -155q-7 -24 -30 -24h-186q-11 0 -20 7.5t-10 17.5 l-23 153q-34 10 -75 31l-118 -89q-7 -7 -20 -7q-11 0 -21 8q-144 133 -144 160q0 9 7 19q10 14 41 53t47 61q-23 44 -35 82l-152 24q-10 1 -17 9.5t-7 19.5v185q0 10 7 19.5t16 10.5l155 24q11 35 32 76q-34 48 -90 115q-7 11 -7 20q0 12 7 20q22 30 82 89t79 59q11 0 21 -7 l115 -90q34 18 77 32q11 108 23 154q7 24 30 24h186q11 0 20 -7.5t10 -17.5l23 -153q34 -10 75 -31l118 89q8 7 20 7q11 0 21 -8q144 -133 144 -160q0 -8 -7 -19q-12 -16 -42 -54t-45 -60q23 -48 34 -82l152 -23q10 -2 17 -10.5t7 -19.5zM1920 198v-140q0 -16 -149 -31 q-12 -27 -30 -52q51 -113 51 -138q0 -4 -4 -7q-122 -71 -124 -71q-8 0 -46 47t-52 68q-20 -2 -30 -2t-30 2q-14 -21 -52 -68t-46 -47q-2 0 -124 71q-4 3 -4 7q0 25 51 138q-18 25 -30 52q-149 15 -149 31v140q0 16 149 31q13 29 30 52q-51 113 -51 138q0 4 4 7q4 2 35 20 t59 34t30 16q8 0 46 -46.5t52 -67.5q20 2 30 2t30 -2q51 71 92 112l6 2q4 0 124 -70q4 -3 4 -7q0 -25 -51 -138q17 -23 30 -52q149 -15 149 -31zM1920 1222v-140q0 -16 -149 -31q-12 -27 -30 -52q51 -113 51 -138q0 -4 -4 -7q-122 -71 -124 -71q-8 0 -46 47t-52 68 q-20 -2 -30 -2t-30 2q-14 -21 -52 -68t-46 -47q-2 0 -124 71q-4 3 -4 7q0 25 51 138q-18 25 -30 52q-149 15 -149 31v140q0 16 149 31q13 29 30 52q-51 113 -51 138q0 4 4 7q4 2 35 20t59 34t30 16q8 0 46 -46.5t52 -67.5q20 2 30 2t30 -2q51 71 92 112l6 2q4 0 124 -70 q4 -3 4 -7q0 -25 -51 -138q17 -23 30 -52q149 -15 149 -31z"/></svg>
<span class="t" style="left:96.5px;top:540.30px;letter-spacing:-0.509px">Processes</span>
<svg class="i" style="left:42.7px;top:574.85px;width:13.3px;height:13.3px" viewBox="0 0 14 14"><rect x="0.7" y="0.7" width="12.6" height="12.6" rx="2.2" fill="none" stroke="#111" stroke-width="1.3"/><path d="M7 2.5V11.5M2.5 7H11.5" stroke="#111" stroke-width="1.35"/></svg>
<svg class="i" style="left:70px;top:573.1px;width:15.60px;height:18.2px;" viewBox="0 -1536 1536 1792"><path fill="#e8602c" transform="scale(1,-1)" d="M896 992v-448q0 -14 -9 -23t-23 -9h-320q-14 0 -23 9t-9 23v64q0 14 9 23t23 9h224v352q0 14 9 23t23 9h64q14 0 23 -9t9 -23zM1312 640q0 148 -73 273t-198 198t-273 73t-273 -73t-198 -198t-73 -273t73 -273t198 -198t273 -73t273 73t198 198t73 273zM1536 640 q0 -209 -103 -385.5t-279.5 -279.5t-385.5 -103t-385.5 103t-279.5 279.5t-103 385.5t103 385.5t279.5 279.5t385.5 103t385.5 -103t279.5 -279.5t103 -385.5z"/></svg>
<span class="t" style="left:96.5px;top:571.30px;letter-spacing:-0.198px">Chores</span>
<svg class="i" style="left:42.7px;top:604.85px;width:13.3px;height:13.3px" viewBox="0 0 14 14"><rect x="0.7" y="0.7" width="12.6" height="12.6" rx="2.2" fill="none" stroke="#111" stroke-width="1.3"/><path d="M7 2.5V11.5M2.5 7H11.5" stroke="#111" stroke-width="1.35"/></svg>
<svg class="i" style="left:70.5px;top:604.1px;width:16.60px;height:16.6px;" viewBox="0 -1536 1792 1792"><path fill="#333" transform="scale(1,-1)" d="M128 128h1024v128h-1024v-128zM128 640h1024v128h-1024v-128zM1696 192q0 40 -28 68t-68 28t-68 -28t-28 -68t28 -68t68 -28t68 28t28 68zM128 1152h1024v128h-1024v-128zM1696 704q0 40 -28 68t-68 28t-68 -28t-28 -68t28 -68t68 -28t68 28t28 68zM1696 1216 q0 40 -28 68t-68 28t-68 -28t-28 -68t28 -68t68 -28t68 28t28 68zM1792 384v-384h-1792v384h1792zM1792 896v-384h-1792v384h1792zM1792 1408v-384h-1792v384h1792z"/></svg>
<span class="t" style="left:96.5px;top:601.30px;letter-spacing:0.459px">Administration</span>
<svg class="i" style="left:42.7px;top:635.85px;width:13.3px;height:13.3px" viewBox="0 0 14 14"><rect x="0.7" y="0.7" width="12.6" height="12.6" rx="2.2" fill="none" stroke="#111" stroke-width="1.3"/><path d="M7 2.5V11.5M2.5 7H11.5" stroke="#111" stroke-width="1.35"/></svg>
<svg class="i" style="left:70.5px;top:635.1px;width:15.41px;height:16.6px;" viewBox="0 -1536 1664 1792"><path fill="#7b4f8e" transform="scale(1,-1)" d="M1664 438q0 -81 -44.5 -135t-123.5 -54q-41 0 -77.5 17.5t-59 38t-56.5 38t-71 17.5q-110 0 -110 -124q0 -39 16 -115t15 -115v-5q-22 0 -33 -1q-34 -3 -97.5 -11.5t-115.5 -13.5t-98 -5q-61 0 -103 26.5t-42 83.5q0 37 17.5 71t38 56.5t38 59t17.5 77.5q0 79 -54 123.5 t-135 44.5q-84 0 -143 -45.5t-59 -127.5q0 -43 15 -83t33.5 -64.5t33.5 -53t15 -50.5q0 -45 -46 -89q-37 -35 -117 -35q-95 0 -245 24q-9 2 -27.5 4t-27.5 4l-13 2q-1 0 -3 1q-2 0 -2 1v1024q2 -1 17.5 -3.5t34 -5t21.5 -3.5q150 -24 245 -24q80 0 117 35q46 44 46 89 q0 22 -15 50.5t-33.5 53t-33.5 64.5t-15 83q0 82 59 127.5t144 45.5q80 0 134 -44.5t54 -123.5q0 -41 -17.5 -77.5t-38 -59t-38 -56.5t-17.5 -71q0 -57 42 -83.5t103 -26.5q64 0 180 15t163 17v-2q-1 -2 -3.5 -17.5t-5 -34t-3.5 -21.5q-24 -150 -24 -245q0 -80 35 -117 q44 -46 89 -46q22 0 50.5 15t53 33.5t64.5 33.5t83 15q82 0 127.5 -59t45.5 -143z"/></svg>
<span class="t" style="left:96.5px;top:632.30px;letter-spacing:-0.159px">Tools</span>
<svg class="i" style="left:42.7px;top:666.85px;width:13.3px;height:13.3px" viewBox="0 0 14 14"><rect x="0.7" y="0.7" width="12.6" height="12.6" rx="2.2" fill="none" stroke="#111" stroke-width="1.3"/><path d="M7 2.5V11.5M2.5 7H11.5" stroke="#111" stroke-width="1.35"/></svg>
<svg class="i" style="left:71px;top:665.8px;width:16.5px;height:16.5px" viewBox="0 0 16 16"><rect width="16" height="16" rx="0.8" fill="#57a8e8"/><path d="M0 9.3 L3 9.3 L8.4 2.6 L7.7 13 L13.2 6 L16 6.4" stroke="#fff" stroke-width="1.4" fill="none" stroke-linejoin="miter"/></svg>
<span class="t" style="left:96.5px;top:663.30px;letter-spacing:-0.500px">Pulse</span>
<svg class="i" style="left:42.7px;top:697.85px;width:13.3px;height:13.3px" viewBox="0 0 14 14"><rect x="0.7" y="0.7" width="12.6" height="12.6" rx="2.2" fill="none" stroke="#111" stroke-width="1.3"/><path d="M7 2.5V11.5M2.5 7H11.5" stroke="#111" stroke-width="1.35"/></svg>
<svg class="i" style="left:71px;top:696.8px;width:16.5px;height:16.5px" viewBox="0 0 18 18"><rect width="18" height="18" fill="#0f4c6e"/><path d="M0 0H18V18H0Z" fill="#0f4c6e"/><path d="M-1 18H1.2Q3 4 18 2" stroke="#fff" stroke-width="2" fill="none"/><path d="M-1 19L1.2 18Q2 12 4 8L-1 8Z" fill="#fff" opacity="0"/></svg>
<span class="t" style="left:96.5px;top:694.30px;letter-spacing:0.272px">Atmosphere</span>
<svg class="i" style="left:19px;top:727.3px;width:14.23px;height:16.6px;" viewBox="0 -1536 1536 1792"><path fill="#111" transform="scale(1,-1)" d="M1184 640q0 -26 -19 -45l-544 -544q-19 -19 -45 -19t-45 19t-19 45v288h-448q-26 0 -45 19t-19 45v384q0 26 19 45t45 19h448v288q0 26 19 45t45 19t45 -19l544 -544q19 -19 19 -45zM1536 992v-704q0 -119 -84.5 -203.5t-203.5 -84.5h-320q-13 0 -22.5 9.5t-9.5 22.5 q0 4 -1 20t-0.5 26.5t3 23.5t10 19.5t20.5 6.5h320q66 0 113 47t47 113v704q0 66 -47 113t-113 47h-288h-11h-13t-11.5 1t-11.5 3t-8 5.5t-7 9t-2 13.5q0 4 -1 20t-0.5 26.5t3 23.5t10 19.5t20.5 6.5h320q119 0 203.5 -84.5t84.5 -203.5z"/></svg>
<span class="t" style="left:43px;top:725.30px;letter-spacing:-1.099px">DEV</span>
<div class="dot" style="top:730.70px"></div>
<svg class="i" style="left:19px;top:758.3px;width:14.23px;height:16.6px;" viewBox="0 -1536 1536 1792"><path fill="#111" transform="scale(1,-1)" d="M1184 640q0 -26 -19 -45l-544 -544q-19 -19 -45 -19t-45 19t-19 45v288h-448q-26 0 -45 19t-19 45v384q0 26 19 45t45 19h448v288q0 26 19 45t45 19t45 -19l544 -544q19 -19 19 -45zM1536 992v-704q0 -119 -84.5 -203.5t-203.5 -84.5h-320q-13 0 -22.5 9.5t-9.5 22.5 q0 4 -1 20t-0.5 26.5t3 23.5t10 19.5t20.5 6.5h320q66 0 113 47t47 113v704q0 66 -47 113t-113 47h-288h-11h-13t-11.5 1t-11.5 3t-8 5.5t-7 9t-2 13.5q0 4 -1 20t-0.5 26.5t3 23.5t10 19.5t20.5 6.5h320q119 0 203.5 -84.5t84.5 -203.5z"/></svg>
<span class="t" style="left:43px;top:756.30px;letter-spacing:-0.693px">FIN</span>
<div class="dot" style="top:761.70px"></div>
<svg class="i" style="left:19px;top:789.3px;width:14.23px;height:16.6px;" viewBox="0 -1536 1536 1792"><path fill="#111" transform="scale(1,-1)" d="M1184 640q0 -26 -19 -45l-544 -544q-19 -19 -45 -19t-45 19t-19 45v288h-448q-26 0 -45 19t-19 45v384q0 26 19 45t45 19h448v288q0 26 19 45t45 19t45 -19l544 -544q19 -19 19 -45zM1536 992v-704q0 -119 -84.5 -203.5t-203.5 -84.5h-320q-13 0 -22.5 9.5t-9.5 22.5 q0 4 -1 20t-0.5 26.5t3 23.5t10 19.5t20.5 6.5h320q66 0 113 47t47 113v704q0 66 -47 113t-113 47h-288h-11h-13t-11.5 1t-11.5 3t-8 5.5t-7 9t-2 13.5q0 4 -1 20t-0.5 26.5t3 23.5t10 19.5t20.5 6.5h320q119 0 203.5 -84.5t84.5 -203.5z"/></svg>
<span class="t" style="left:43px;top:787.30px;letter-spacing:-0.547px">TM1SRV01</span>
<div class="dot" style="top:792.70px"></div>
<div class="abs" style="left:303px;top:133px;width:10px;height:684px;background:#e4e4e4"></div>
<div class="abs" style="left:303px;top:361px;width:10px;height:456px;background:#c6c6c6"></div>

<!-- right frame -->
<div class="abs" style="left:319px;top:92px;width:875px;height:728px;border-left:1px solid #c9c9c9;border-top:1px solid #c9c9c9;border-bottom:1px solid #c9c9c9;box-sizing:border-box"></div>
<div class="abs" style="left:319px;top:51px;width:271px;height:42px;border:1px solid #c9c9c9;border-bottom:none;border-radius:5px 5px 0 0;background:#fff;box-sizing:border-box"></div>
<svg class="i" style="left:340px;top:63.5px;width:17.50px;height:17.5px;" viewBox="0 -1536 1792 1792"><path fill="#e74c55" transform="scale(1,-1)" d="M1792 640q0 -174 -120 -321.5t-326 -233t-450 -85.5q-70 0 -145 8q-198 -175 -460 -242q-49 -14 -114 -22q-17 -2 -30.5 9t-17.5 29v1q-3 4 -0.5 12t2 10t4.5 9.5l6 9t7 8.5t8 9q7 8 31 34.5t34.5 38t31 39.5t32.5 51t27 59t26 76q-157 89 -247.5 220t-90.5 281 q0 130 71 248.5t191 204.5t286 136.5t348 50.5q244 0 450 -85.5t326 -233t120 -321.5z"/></svg>
<span class="abs" style="left:366px;top:63px;font-size:16.8px;line-height:22px;color:#e74c55;white-space:nowrap">CXMD:Messenger</span>
<svg class="i" style="left:511px;top:64px;width:16.25px;height:17.5px;" viewBox="0 -1536 1664 1792"><path fill="#111" transform="scale(1,-1)" d="M1137 532l306 297l-422 62l-189 382l-189 -382l-422 -62l306 -297l-73 -421l378 199l377 -199zM1664 889q0 -22 -26 -48l-363 -354l86 -500q1 -7 1 -20q0 -50 -41 -50q-19 0 -40 12l-449 236l-449 -236q-22 -12 -40 -12q-21 0 -31.5 14.5t-10.5 35.5q0 6 2 20l86 500 l-364 354q-25 27 -25 48q0 37 56 46l502 73l225 455q19 41 49 41t49 -41l225 -455l502 -73q56 -9 56 -46z"/></svg>
<svg class="i" style="left:537.7px;top:64px;width:16.25px;height:17.5px;" viewBox="0 -1536 1664 1792"><path fill="#6c737d" transform="scale(1,-1)" d="M1664 960v-256q0 -26 -19 -45t-45 -19h-64q-26 0 -45 19t-19 45v256q0 106 -75 181t-181 75t-181 -75t-75 -181v-192h96q40 0 68 -28t28 -68v-576q0 -40 -28 -68t-68 -28h-960q-40 0 -68 28t-28 68v576q0 40 28 68t68 28h672v192q0 185 131.5 316.5t316.5 131.5 t316.5 -131.5t131.5 -316.5z"/></svg>
<svg class="i" style="left:567px;top:66px;width:14px;height:14px" viewBox="0 0 14 14"><path d="M2.2 2.8L11.6 11.4M11.6 2.8L2.2 11.4" stroke="#000" stroke-width="2.4" fill="none"/></svg>

<!-- card -->
<div class="abs" style="left:332px;top:99px;width:850px;height:213.5px;border:1px solid #dfdfdf;border-radius:4px;box-sizing:border-box;background:#fff"></div>
<div class="abs" style="left:333px;top:100px;width:848px;height:57px;border-bottom:1px solid #dfdfdf;border-radius:3px 3px 0 0;background:#f7f7f7"></div>
<svg class="i" style="left:348px;top:120px;width:17.50px;height:17.5px;" viewBox="0 -1536 1792 1792"><path fill="#212529" transform="scale(1,-1)" d="M1408 768q0 -139 -94 -257t-256.5 -186.5t-353.5 -68.5q-86 0 -176 16q-124 -88 -278 -128q-36 -9 -86 -16h-3q-11 0 -20.5 8t-11.5 21q-1 3 -1 6.5t0.5 6.5t2 6l2.5 5t3.5 5.5t4 5t4.5 5t4 4.5q5 6 23 25t26 29.5t22.5 29t25 38.5t20.5 44q-124 72 -195 177t-71 224 q0 139 94 257t256.5 186.5t353.5 68.5t353.5 -68.5t256.5 -186.5t94 -257zM1792 512q0 -120 -71 -224.5t-195 -176.5q10 -24 20.5 -44t25 -38.5t22.5 -29t26 -29.5t23 -25q1 -1 4 -4.5t4.5 -5t4 -5t3.5 -5.5l2.5 -5t2 -6t0.5 -6.5t-1 -6.5q-3 -14 -13 -22t-22 -7 q-50 7 -86 16q-154 40 -278 128q-90 -16 -176 -16q-271 0 -472 132q58 -4 88 -4q161 0 309 45t264 129q125 92 192 212t67 254q0 77 -23 152q129 -71 204 -178t75 -230z"/></svg>
<span class="t" style="left:376px;top:117px;letter-spacing:-0.083px">Send Message</span>
<span class="t b" style="left:898px;top:117px;letter-spacing:0.042px">You</span>
<div class="abs" style="left:932px;top:108px;width:239.5px;height:40.5px;border:1px solid #ced4da;border-radius:4px;background:#fff;box-sizing:border-box"></div>
<span class="t" style="left:946px;top:117px;color:#495057;letter-spacing:-0.047px">Harvey</span>

<span class="t b" style="left:342px;top:173px;letter-spacing:-0.188px">Recipients</span>
<div class="abs" style="left:557.5px;top:166px;width:253px;height:72px;border:1px solid #ddd;border-radius:4px;background:#fff;box-sizing:border-box"></div>
<div class="abs" style="left:564px;top:172px;width:90px;height:27px;border-radius:4px;background:#efefef"></div>
<span class="t" style="left:571.5px;top:174px;color:#333;letter-spacing:0.185px">Vincent</span>
<svg class="i" style="left:631px;top:181.5px;width:14px;height:14px" viewBox="0 0 14 14"><path d="M2.3 2.4L12.3 12.2M12.3 2.4L2.3 12.2" stroke="#555" stroke-width="2.4" fill="none"/></svg>
<div class="abs" style="left:848px;top:176.2px;width:13.6px;height:13.6px;border:1px solid #767676;border-radius:2.5px;background:#fff;box-sizing:border-box"></div>
<span class="t b" style="left:868px;top:173px;letter-spacing:-0.241px">Broadcast</span>

<span class="t b" style="left:342px;top:245px;letter-spacing:-0.056px">Message</span>
<div class="abs" style="left:557px;top:237.5px;width:397.8px;height:65.5px;border:1px solid #80bdff;border-radius:4px;background:#fff;box-sizing:border-box;box-shadow:0 0 0 3px rgba(0,123,255,.25)"></div>
<div class="abs" style="left:572px;top:247px;width:1px;height:22px;background:#333"></div>
<svg class="i" style="left:658px;top:244.6px;width:14px;height:25.6px" viewBox="0 0 14 28" preserveAspectRatio="none"><path d="M1 1.5H5.5Q7 1.5 7 3V25Q7 26.5 5.5 26.5H1M13 1.5H8.5Q7 1.5 7 3M7 25Q7 26.5 8.5 26.5H13" stroke="#000" stroke-width="1.8" fill="none"/></svg>
<svg class="i" style="left:939px;top:287px;width:14px;height:14px" viewBox="0 0 14 14"><path d="M2 12.5L12.5 2M7.5 12.5L12.5 7.5" stroke="#333" stroke-width="1.2"/></svg>
<div class="abs" style="left:1037px;top:264px;width:133.5px;height:38.8px;border:1px solid #d5d5d5;border-radius:4px;background:#f1f1ef;box-sizing:border-box"></div>
<span class="t" style="left:1050px;top:272px;color:#333;letter-spacing:-0.083px">Send Message</span>

<!-- chat -->
<div class="abs" style="left:332px;top:321px;width:850px;height:484px;background:#fff;box-shadow:inset 0 0 187px rgba(0,0,0,.18)"></div>
<div class="abs" style="left:368px;top:338px;width:422px;height:109.5px;border-radius:17px;background:#0084ff;box-shadow:0 4px 10px rgba(0,0,0,.14)"></div>
<span class="abs b" style="left:396.5px;top:353px;font-size:20.4px;line-height:24px;color:#fff;white-space:nowrap">Vincent</span>
<span class="abs" id="msg" style="left:396.5px;top:386px;font-size:18.5px;line-height:24px;color:#fff;white-space:nowrap">Hi Harvey, I'm working on the GL rules today</span>
<span class="abs b" id="ago" style="left:600px;width:161px;text-align:right;top:418px;font-size:12.5px;line-height:16px;color:#cfe6ff;white-space:nowrap">a minute ago</span>
<svg class="i" style="left:1119px;top:328.8px;width:26.71px;height:34px;" viewBox="0 -1536 1408 1792"><path fill="#dc3545" transform="scale(1,-1)" d="M1298 214q0 -40 -28 -68l-136 -136q-28 -28 -68 -28t-68 28l-294 294l-294 -294q-28 -28 -68 -28t-68 28l-136 136q-28 28 -28 68t28 68l294 294l-294 294q-28 28 -28 68t28 68l136 136q28 28 68 28t68 -28l294 -294l294 294q28 28 68 28t68 -28l136 -136q28 -28 28 -68 t-28 -68l-294 -294l294 -294q28 -28 28 -68z"/></svg>
</body></html>
